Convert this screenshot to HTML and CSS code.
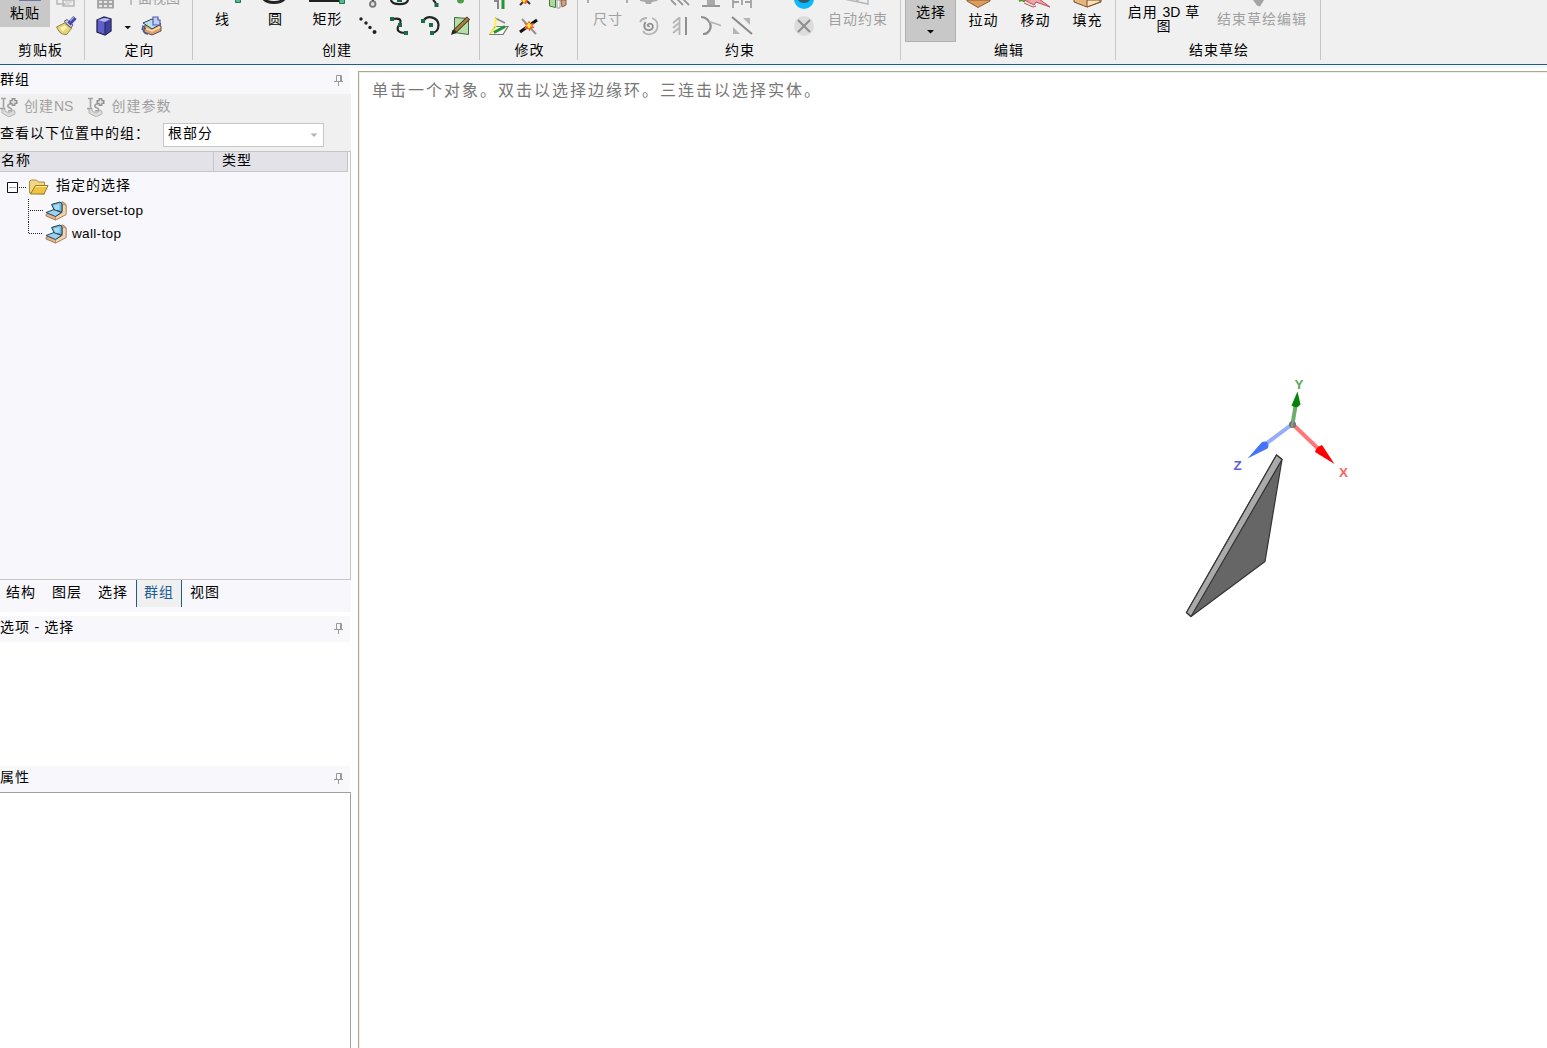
FILE: index.html
```html
<!DOCTYPE html>
<html lang="zh-CN">
<head>
<meta charset="utf-8">
<title>群组</title>
<link rel="stylesheet" href="styles.css">
</head>
<body>
<svg width="0" height="0" class="defs">
  <defs>
    <symbol id="pin" viewBox="0 0 10 13"><path d="M2.500 7.500v-6h5v6M0 7.500h9M4.500 8v4" fill="none" stroke="#999"/><path d="M6.500 2v5" stroke="#999"/></symbol>
    <symbol id="ns" viewBox="0 0 20 20">
      <path d="M2 12l3-1v3l4 2 5-3 1 2v2l-6 3-7-4z" fill="#dcdcdc" stroke="#b4b4b4"/>
      <path d="M1 1.500h5M3.500 2v8.500M0 11.500h5M11 7c-4 0-4 3-1 4s2 3-2 3" fill="none" stroke="#a2a2a2" stroke-width="1.600"/>
      <path d="M13.500 1v8M9.500 5h8" stroke="#909090" stroke-width="4"/><path d="M13.500 2.500v5M11 5h5" stroke="#e4e4e4" stroke-width="1.500"/>
    </symbol>
    <symbol id="part" viewBox="0 0 22 20">
      <path d="M1 13.500L10 9 8 3l10-2 3 2.500v10L10.500 19 1 15z" fill="#e5b586" stroke="#8d6848" stroke-width=".8"/>
      <path d="M17.500 3.500L21 4v9.500L10.500 19v-3.500l7-4z" fill="#f5d6b0" stroke="#a67e58" stroke-width=".7"/>
      <path d="M1 11.500l8-3 7.500 3-6 4z" fill="#9bd2ee" stroke="#23455d"/>
      <path d="M6.500 3.500l8.500-2.500 2 1.500v7.500l-1 1-7-2.500z" fill="#6db9e0" stroke="#23455d"/>
      <path d="M8.500 4.500l6-1.500v5.500l-4 .5z" fill="#a9dcf3"/>
    </symbol>
  </defs>
</svg>
<header class="ribbon">
  <section class="group clipboard">
    <div class="tools">
      <div class="paste"><svg width="50" height="4" viewBox="0 0 50 4"><path d="M19 0h22v1H19z" fill="#6b7ba5"/></svg><span>粘贴</span></div>
      <div class="stack">
        <svg width="34" height="12" viewBox="50 0 34 12"><path d="M57 0v4h8M63 0h11v6H63z" fill="#eee" stroke="#b6b6b6" stroke-width="1.500"/><path d="M65 2h7M65 4h5" stroke="#c8c8c8"/></svg>
        <svg width="34" height="28" viewBox="50 12 34 28"><path d="M56.500 27l8-4 7 5.500-5 6-4-.5-3-2z" fill="#edd572" stroke="#8c824d"/><path d="M60 28l5-2.500 2 2-4 4z" fill="#fff5b5"/><path d="M64 21.500l7 6.500 2-3-6-5.500z" fill="#c8c8d5" stroke="#616177"/><path d="M69 24l6-6.500" stroke="#4548a6" stroke-width="4.500"/><path d="M70 21l4-4" stroke="#a3a9e4" stroke-width="1.300"/></svg>
      </div>
    </div>
    <h2>剪贴板</h2>
  </section>
  <section class="group orient">
    <div class="tools stack">
      <div class="row top dim"><svg width="39" height="12" viewBox="85 0 39 12"><path d="M97 0h17v8.500H97z" fill="#a5a5a5"/><path d="M99 1h3v2h-3zm5 0h3v2h-3zm5 0h3v2h-3zm-10 4h3v2h-3zm5 0h3v2h-3zm5 0h3v2h-3z" fill="#e7e7e7"/></svg><span>平面视图</span></div>
      <svg width="108" height="28" viewBox="85 12 108 28">
        <path d="M97 20l7-3 7 2v12l-6 4-8-3z" fill="#6060c9" stroke="#22224e" stroke-width="1.300"/><path d="M98 20l6-2 6 1-5 3z" fill="#b8b8fa"/><path d="M105 22l5-2v11l-5 3z" fill="#4040a3"/><path d="M105 22v12" stroke="#22224e"/>
        <path d="M124.500 26h6.500l-3.200 3.300z" fill="#111"/>
        <path d="M145 25l9-2 7 3v5l-9 4-8-3z" fill="#dfa168" stroke="#59514f"/><path d="M143 23l9-4 9 5-9 5z" fill="#b5e0ec" stroke="#34414c"/><path d="M145 28l7 3 8-4" fill="none" stroke="#ffe1b4" stroke-width="1.500"/><path d="M153 17h5v3h2v5h-7z" fill="#c2ccfa" stroke="#515aae" stroke-width="1.200"/><path d="M143 28c0 5 2 6 5 6M142 30l1-4 3 3" fill="none" stroke="#4a5598" stroke-width="1.300"/>
      </svg>
    </div>
    <h2>定向</h2>
  </section>
  <section class="group create">
    <div class="tools">
      <div class="big"><svg width="52" height="8" viewBox="196 0 52 8"><path d="M235.500-1h5v3.500h-5z" fill="#51bb8d" stroke="#267552"/></svg><span>线</span></div>
      <div class="big"><svg width="52" height="8" viewBox="249 0 52 8"><path d="M263-2c4 6 18 6 22 0" fill="none" stroke="#222" stroke-width="3"/></svg><span>圆</span></div>
      <div class="big"><svg width="52" height="8" viewBox="301 0 52 8"><path d="M309 0h32" stroke="#202020" stroke-width="4"/><path d="M339.500-1h5v4.500h-5z" fill="#51bb8d" stroke="#267552"/></svg><span>矩形</span></div>
      <div class="stack">
        <svg width="124" height="12" viewBox="353 0 124 12"><circle cx="372.700" cy="4" r="2.800" fill="#ddd" stroke="#777" stroke-width="1.800"/><path d="M373 0v1" stroke="#555" stroke-width="2"/><path d="M391 0c1 5.500 16 5.500 17 0" fill="none" stroke="#222" stroke-width="2.200"/><path d="M397-1h5v3h-5z" fill="#176b46"/><path d="M433 0l3 3" stroke="#222" stroke-width="2"/><path d="M434.500 3h4v4h-4z" fill="#176b46"/><circle cx="460.500" cy="0" r="3.500" fill="#4a9f43"/></svg>
        <svg width="124" height="28" viewBox="353 12 124 28"><g fill="#222"><circle cx="361" cy="19" r="1.700"/><circle cx="366" cy="23" r="1.700"/><circle cx="370" cy="27.500" r="1.700"/><circle cx="374.500" cy="32" r="2"/></g><path d="M393 19c5-1 9 0 7 4M399 25c-3 5-1 8 7 8M424 20c4-5 14-3 14.500 5 0 5-3 8-7 8" fill="none" stroke="#222" stroke-width="2.200"/><g fill="#176b46"><path d="M390 17h4v4h-4zm8 6h4v4h-4zm6 8h4v4h-4zm17-12h4v4h-4zm8 4h4v4h-4zm1 8h4v4h-4z"/></g><path d="M454.500 17.500l14 1v16l-14-2z" fill="#b5dfa8" stroke="#3f693b"/><path d="M454 32l14.500-14" stroke="#3f321b" stroke-width="4.500"/><path d="M455.500 30.500L468 18.500" stroke="#a5803d" stroke-width="2.500"/><path d="M451 35l1.500-5 3.500 3z" fill="#222"/></svg>
      </div>
    </div>
    <h2>创建</h2>
  </section>
  <section class="group modify">
    <div class="tools stack">
      <svg width="97" height="12" viewBox="480 0 97 12"><path d="M494 1h4v8" fill="none" stroke="#888" stroke-width="2"/><path d="M503 0v9" stroke="#269334" stroke-width="3"/><path d="M520 5l5-5M527 1l3 3" stroke="#333" stroke-width="2"/><path d="M521 0h7l-2 4-3-1z" fill="#f45c1d"/><path d="M522 0h4l-2 3z" fill="#ffe33c"/><path d="M549.500 0v6l6 1.500V0" fill="#add99b" stroke="#447b3b"/><path d="M557 0h3v8h-3z" fill="#fff" stroke="#999"/><path d="M561 0h5v5l-4 2z" fill="#d5a37e" stroke="#855e43"/></svg>
      <svg width="97" height="28" viewBox="480 12 97 28"><path d="M495 26.500h13l-5 8h-13z" fill="#f5f5f5" stroke="#777" stroke-width="1.200"/><path d="M495 18l10 5" fill="none" stroke="#888" stroke-width="1.500"/><path d="M495.500 18v10M490.500 34l4-6" stroke="#fff12c" stroke-width="1.800"/><path d="M494 32.500l11-6" stroke="#1b9634" stroke-width="3"/><path d="M520 32l17-12" stroke="#111" stroke-width="3"/><path d="M522 19l14 15" stroke="#929292" stroke-width="2"/><path d="M529 20.500l1.500 3 3.500-.5-1.500 2.500 2 2.500-3.500.5-1.500 3-1.500-3-4 .5 2-3.500-2-2.500 3.500.5z" fill="#f6602d"/><path d="M529 23v5M526.500 25.500h5" stroke="#ffed38" stroke-width="2"/></svg>
    </div>
    <h2>修改</h2>
  </section>
  <section class="group constrain">
    <div class="tools dim">
      <div class="big size"><svg width="60" height="8" viewBox="578 0 60 8"><path d="M588 0v3M627 0v3" stroke="#a4a4a4" stroke-width="1.800"/></svg><span>尺寸</span></div>
      <div class="stack">
        <svg width="150" height="12" viewBox="638 0 150 12"><path d="M640 0h18l-1 1-5 1-1 2h-5l-1-2-5-1z" fill="#aaa"/><path d="M671 0l5 5M677-1l6 6M683-1l6 6M702 6h18" fill="none" stroke="#999" stroke-width="1.800"/><path d="M707 0h8v5h-8z" fill="#aaa"/><path d="M733 0v8M742 0v5M751 0v8M733 2h6M745 2h6" fill="none" stroke="#a2a2a2" stroke-width="1.800"/></svg>
        <svg width="150" height="28" viewBox="638 12 150 28"><g fill="none" stroke="#b4b4b4" stroke-width="1.800"><path d="M640 22c1-2 4-4 7-4M652 18c8 3 7 14-1 16-4 1-7-1-8-3"/><path d="M645.500 22c-3 5 0 9 4 8 5-1 4-8-1-6-2 1 0 3 1 2" stroke="#8f8f8f"/><path d="M679.500 17v18M679 18l-6 5M679 23l-6 5M679 28l-6 5"/><path d="M701 17c5 0 7 3 9 6 2 5-1 11-7 11" stroke="#8f8f8f" stroke-width="2.200"/><path d="M709 21.500l12 4"/></g><path d="M686 17v18" stroke="#8f8f8f" stroke-width="2"/><path d="M732 17l20 17" stroke="#888" stroke-width="2"/><path d="M743 18h7v7zM733 27v7h7z" fill="#b4b4b4"/></svg>
      </div>
      <div class="stack">
        <svg width="35" height="12" viewBox="788 0 35 12"><circle cx="804" cy="-1" r="10" fill="#0cb9fb"/><path d="M798 0c2 4 10 4 12 0" fill="#38566a"/></svg>
        <svg width="35" height="28" viewBox="788 12 35 28"><circle cx="804" cy="26" r="10" fill="#dcdcdc"/><path d="M798 20l12 12M810 20l-12 12" stroke="#919191" stroke-width="2.200"/></svg>
      </div>
      <div class="big auto"><svg width="70" height="8" viewBox="823 0 70 8"><path d="M844-1l24 5V0M856 1l4-2" fill="none" stroke="#b7b7b7" stroke-width="1.500"/></svg><span>自动约束</span></div>
    </div>
    <h2>约束</h2>
  </section>
  <section class="group edit">
    <div class="tools">
      <div class="select"><span>选择</span><svg width="8" height="5" viewBox="0 0 8 5"><path d="M0 1h7L3.500 4.500z" fill="#000"/></svg></div>
      <div class="big"><svg width="52" height="8" viewBox="957 0 52 8"><path d="M967 0v1l11 6.500L990 1V0z" fill="#df9c5c" stroke="#895d31"/></svg><span>拉动</span></div>
      <div class="big"><svg width="52" height="8" viewBox="1009 0 52 8"><path d="M1019 1c2-1 5-1 5 1" fill="none" stroke="#55962c" stroke-width="2"/><path d="M1024 0l10 5 2-3 14 5-11-8z" fill="#f1a5a8" stroke="#b85258"/><path d="M1024 3l9 4 3-1" fill="none" stroke="#b85258"/></svg><span>移动</span></div>
      <div class="big"><svg width="52" height="8" viewBox="1061 0 52 8"><path d="M1074-1v3l13 5 14-5v-3z" fill="#e9b57e" stroke="#75502f"/><path d="M1087 0v7l13-5v-2z" fill="#ffe0b4" stroke="#75502f"/></svg><span>填充</span></div>
    </div>
    <h2>编辑</h2>
  </section>
  <section class="group finish">
    <div class="tools">
      <div class="sketch3d">启用 <b>3D</b> 草<br>图</div>
      <div class="big end dim"><svg width="100" height="8" viewBox="1212 0 100 8"><path d="M1253 0h11l-4 6.500-3-1z" fill="#a4a4a4"/></svg><span>结束草绘编辑</span></div>
    </div>
    <h2>结束草绘</h2>
  </section>
</header>
<main class="workspace">
  <aside class="sidebar">
    <div class="title groups-title"><span>群组</span><svg width="10" height="13"><use href="#pin"/></svg></div>
    <div class="toolbar">
      <div class="actions dim"><svg width="20" height="20"><use href="#ns"/></svg><span>创建<b>NS</b></span><svg width="20" height="20"><use href="#ns"/></svg><span>创建参数</span></div>
      <div class="filter"><label>查看以下位置中的组：</label><div class="combo"><span>根部分</span><svg width="8" height="5" viewBox="0 0 8 5"><path d="M.5.500h7L4 4z" fill="#b4b4b4"/></svg></div></div>
    </div>
    <div class="tree">
      <div class="columns"><span>名称</span><span>类型</span></div>
      <div class="node root">
        <svg width="49" height="24" viewBox="0 175 49 24"><path d="M7.500 182.500h10v10h-10z" fill="#fff" stroke="#111"/><path d="M9 187.500h7" stroke="#aaa"/><path d="M19 187.500h8" stroke="#222" stroke-dasharray="1 1"/><path d="M29.500 193v-12l2-1h5l2 2h6v12z" fill="#f1d784" stroke="#b08b42"/><path d="M30.500 194l5-8.500h12.500l-4 8.500z" fill="#efc23f" stroke="#9d782c"/><path d="M36 186.500h11" stroke="#fff0a3"/></svg>
        <span>指定的选择</span>
      </div>
      <div class="node"><svg width="17" height="23"><path d="M.5-2v25M2 11.500h13" stroke="#222" stroke-dasharray="1 1" fill="none"/></svg><svg width="22" height="20"><use href="#part"/></svg><span>overset-top</span></div>
      <div class="node"><svg width="17" height="23"><path d="M.5 0v11M1 11.500h14" stroke="#222" stroke-dasharray="1 1" fill="none"/></svg><svg width="22" height="20"><use href="#part"/></svg><span>wall-top</span></div>
    </div>
    <nav class="tabs"><span>结构</span><span>图层</span><span>选择</span><span class="active">群组</span><span>视图</span></nav>
    <div class="title options-title"><span>选项<b> - </b>选择</span><svg width="10" height="13"><use href="#pin"/></svg></div>
    <div class="options"></div>
    <div class="title"><span>属性</span><svg width="10" height="13"><use href="#pin"/></svg></div>
    <div class="properties"></div>
  </aside>
  <section class="viewport">
    <p class="hint">单击一个对象。双击以选择边缘环。三连击以选择实体。</p>
    <svg class="scene" width="200" height="260" viewBox="1170 370 200 260">
      <path d="M1276.500 455l5.500 4.500L1265 561.500 1191 616.500l-4.500-4z" fill="#666" stroke="#333" stroke-width="1.200" stroke-linejoin="round"/>
      <path d="M1276.500 455l5.500 4.500L1191 616.500l-4.500-4z" fill="#aaa" stroke="#333" stroke-width="1.200" stroke-linejoin="round"/>
      <path d="M1292.500 424l-27 20" stroke="#95adfc" stroke-width="4"/><path d="M1292.500 424l26 25" stroke="#ff7777" stroke-width="4"/><path d="M1292.500 424l3-18" stroke="#6caf6c" stroke-width="4"/>
      <path d="M1247.500 458.500l14-16q3-2 6 0 2 3 0 6z" fill="#4574fb"/><path d="M1334.500 464l-19.500-12q1-5 7-7z" fill="#f00"/><path d="M1297.500 391.500l3 13q-4 5-9 1z" fill="#078107"/>
      <circle cx="1292.500" cy="424.500" r="3.500" fill="#707570"/><path d="M1292 427l1-7" stroke="#87a587" stroke-width="2"/>
      <g class="axis-names"><text x="1294.500" y="389" fill="#5aaa5a">Y</text><text x="1233.500" y="470" fill="#5c5cef">Z</text><text x="1339" y="477" fill="#ff6262">X</text></g>
    </svg>
  </section>
</main>
</body>
</html>
```
FILE: styles.css
```css
* { box-sizing: border-box; }
body { margin: 0; width: 1547px; height: 1048px; overflow: hidden; display: flex; flex-direction: column; background: #fff; color: #000; font: 14px/20px "Liberation Sans", "Noto Sans CJK SC", sans-serif; letter-spacing: 1px; }
svg { display: block; flex: none; }
b { font-weight: normal; letter-spacing: 0; }
.defs { position: absolute; }
span, label { white-space: nowrap; }

.ribbon { height: 65px; flex: none; display: flex; background: #f0f0f0; border-bottom: 1px solid #1f5c94; }
.group { height: 60px; display: flex; flex-direction: column; border-right: 1px solid #c6c6c6; }
.group h2 { margin: 0; height: 20px; padding-left: 2px; font-size: 14px; font-weight: normal; text-align: center; }
.group.clipboard h2 { padding: 0 3px 0 0; }
.clipboard { width: 85px; }
.orient { width: 108px; }
.create { width: 287px; }
.modify { width: 98px; }
.constrain { width: 323px; }
.edit { width: 215px; }
.finish { width: 205px; }
.tools { display: flex; height: 40px; flex: none; }
.stack { display: flex; flex-direction: column; }
.dim { color: #a0a0a0; }
.paste { width: 50px; height: 27px; background: #c8c8c8; display: flex; flex-direction: column; align-items: center; }
.paste span { margin-top: -1px; }
.top { display: flex; height: 12px; }
.top span { margin-top: -12px; letter-spacing: 0; }
.big { width: 52px; display: flex; flex-direction: column; align-items: center; }
.big span { margin-top: 1px; padding-left: 1px; }
.create .tools { padding-left: 3px; }
.create .big:nth-child(2) { margin-left: 1px; }
.size { width: 60px; }
.auto { width: 70px; }
.size span, .auto span, .end span { padding-left: 0; }
.edit .tools { padding-left: 4px; }
.select { width: 51px; height: 42px; flex: none; background: #c8c8c8; border: 1px solid #b0b0b0; border-top: 0; display: flex; flex-direction: column; align-items: center; gap: 7px; padding-top: 2px; margin-right: 1px; }
.select span { padding-left: 1px; }
.edit .big span { margin-top: 2px; }
.sketch3d { width: 96px; padding-top: 5px; text-align: center; line-height: 14px; white-space: nowrap; }
.end { width: 100px; }

.workspace { flex: 1; min-height: 0; display: flex; background: linear-gradient(#f8f8fc 3px, #fff 3px); }
.sidebar { width: 351px; display: flex; flex-direction: column; }
.title { width: 350px; height: 26px; flex: none; background: #f8f8fc; display: flex; justify-content: space-between; align-items: center; padding: 0 6px 4px 0; }
.title svg { margin-top: 2px; }
.title b { white-space: pre; letter-spacing: .6px; }
.groups-title { height: 29px; padding-bottom: 2px; }
.groups-title svg { margin-top: 4px; }
.toolbar { height: 57px; background: #f0f0f0; flex: none; }
.actions { display: flex; height: 29px; padding-top: 3px; }
.actions span { margin: -1px 14px 0 4px; }
.filter { display: flex; }
.filter label { width: 163px; }
.combo { width: 161px; height: 24px; background: #fff; border: 1px solid #c6c6c6; display: flex; justify-content: space-between; align-items: center; padding: 0 5px 5px 4px; }
.combo svg { margin-top: 6px; }
.tree { height: 429px; flex: none; background: #f8f8fc; border: 1px solid #c6c6c6; border-left: 0; }
.columns { width: 348px; height: 20px; display: flex; background: #e3e2e8; border: solid #c6c6c6; border-width: 0 1px 1px 0; margin-bottom: 3px; }
.columns span { line-height: 16px; padding-left: 1px; }
.columns span:first-child { width: 214px; border-right: 1px solid #c6c6c6; }
.columns span + span { padding-left: 8px; }
.node { height: 23px; display: flex; align-items: center; padding-left: 28px; font-size: 13.6px; letter-spacing: .3px; }
.node span { margin-left: 5px; }
.root { height: 24px; padding-left: 0; font-size: 14px; letter-spacing: 1px; }
.root span { margin: -5px 0 0 7px; }
.tabs { height: 32px; flex: none; display: flex; background: #f8f8fc; padding-left: 6px; }
.tabs span { height: 27px; padding-top: 2px; width: 46px; }
.tabs span:nth-child(3) { width: 38px; }
.tabs .active { background: #f0f0f0; color: #1f5c94; border: solid #1f5c94; border-width: 0 1px; padding-left: 7px; margin-right: 8px; }
.options-title { margin-top: 4px; }
.options { height: 124px; flex: none; }
.properties { flex: 1; border: solid #a0a0a0; border-width: 1px 1px 0 0; }
.viewport { flex: 1; margin: 6px 0 0 7px; position: relative; border: solid #aca899; border-width: 1px 0 0 1px; background: #fff; box-shadow: inset 1px 1px #f1efe2; }
.hint { margin: 9px 0 0 13px; font-size: 16px; letter-spacing: 2px; color: #777; }
.scene { position: absolute; left: 811px; top: 298px; }
.axis-names { font: bold 13.5px "Liberation Sans", sans-serif; letter-spacing: 0; }
```
